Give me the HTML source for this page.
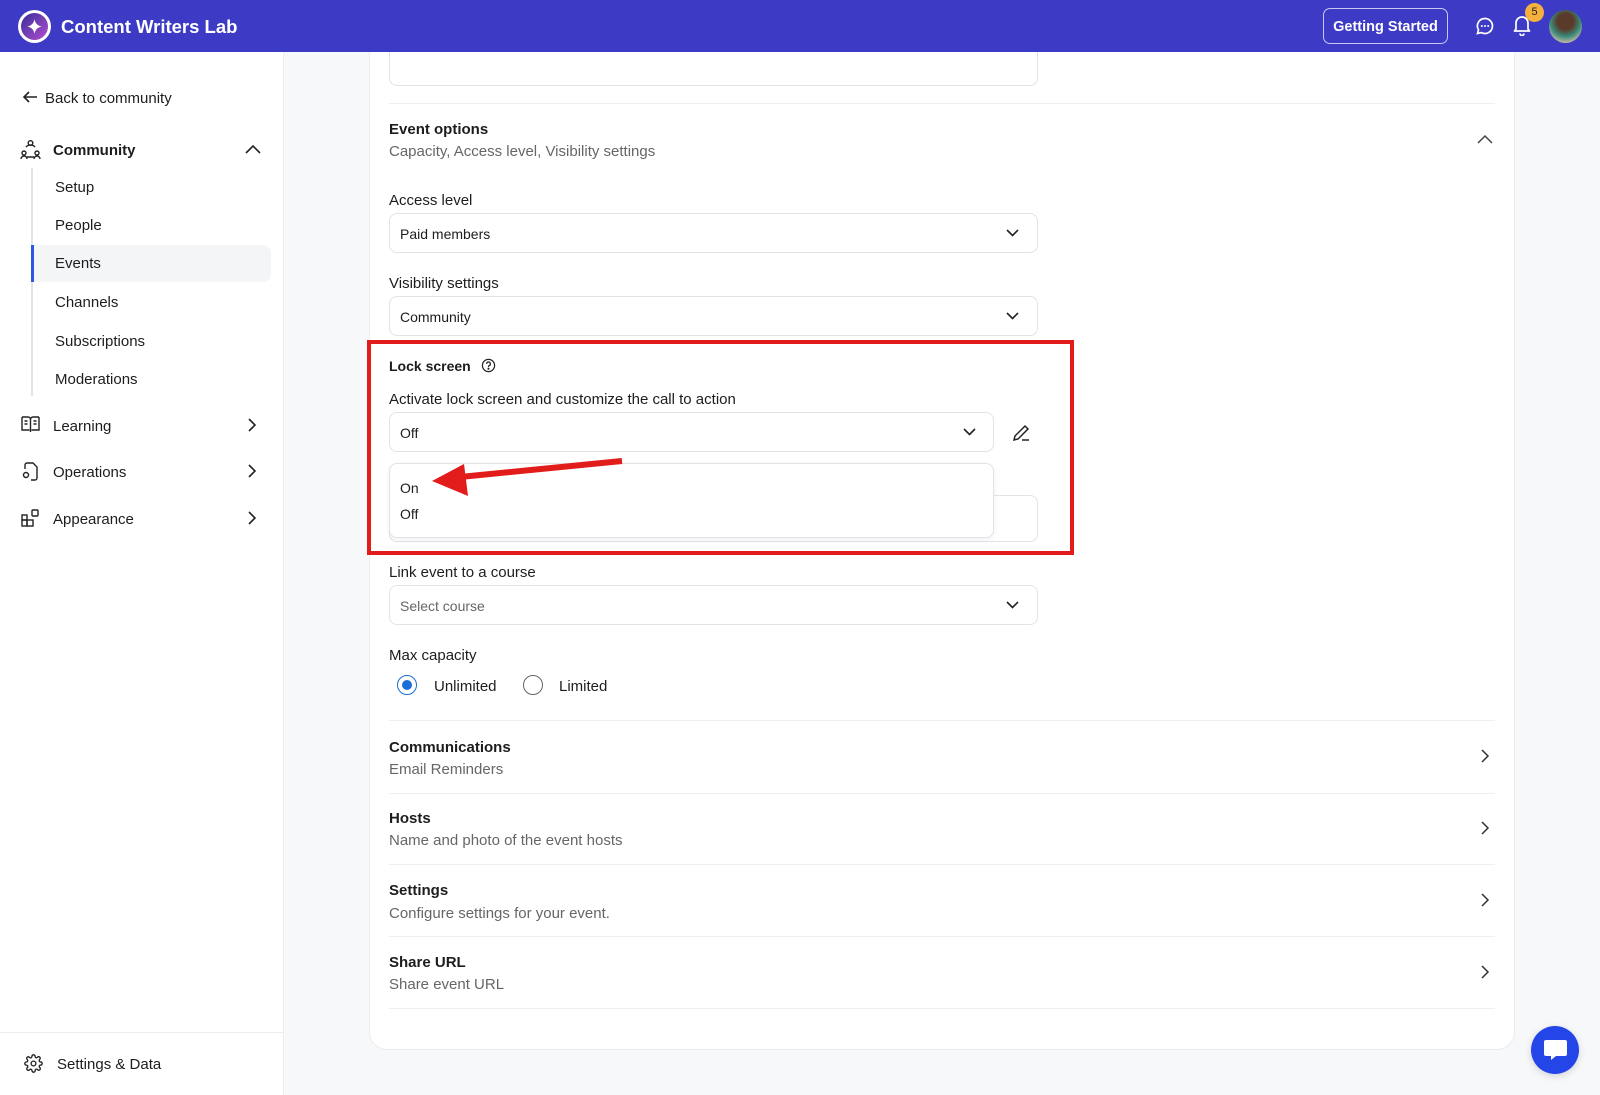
<!DOCTYPE html>
<html><head><meta charset="utf-8"><style>
*{margin:0;padding:0;box-sizing:border-box}
body{width:1600px;height:1095px;position:relative;overflow:hidden;background:#f7f8fa;font-family:"Liberation Sans",sans-serif;color:#1d1d1f;font-size:15px}
.a{position:absolute;line-height:20px;white-space:nowrap;margin-top:2px}
.hdr{position:absolute;left:0;top:0;width:1600px;height:52px;background:#3d3bc5;z-index:5}
.top{z-index:6}
.side{position:absolute;left:0;top:52px;width:284px;height:1043px;background:#fff;border-right:1px solid #ececf0}
.card{position:absolute;left:369px;top:30px;width:1146px;height:1020px;background:#fff;border:1px solid #ececf0;border-radius:18px}
.inp{position:absolute;border:1px solid #e2e3e8;border-radius:8px;background:#fff}
.div{position:absolute;left:389px;width:1106px;height:1px;background:#efeff2}
.b{font-weight:bold}
.g{color:#666}
.s{font-size:14px}
svg{position:absolute}
</style></head><body>
<div class="hdr"></div>
<div class="top" style="position:absolute;left:18px;top:10px;width:33px;height:33px;border-radius:50%;background:#fff"></div>
<div class="top" style="position:absolute;left:21px;top:13px;width:27px;height:27px;border-radius:50%;background:linear-gradient(135deg,#3a2d9a,#b14ed0)"></div>
<svg class="top" style="left:26px;top:18px" width="17" height="17" viewBox="0 0 16 16"><path d="M8 1 Q9 7 15 8 Q9 9 8 15 Q7 9 1 8 Q7 7 8 1Z" fill="#fff"/></svg>
<div class="a b top" style="left:61px;top:13px;font-size:18.5px;line-height:24px;color:#fff">Content Writers Lab</div>
<div class="top" style="position:absolute;left:1323px;top:8px;width:125px;height:36px;border:1px solid #c9c8f0;border-radius:7px;color:#fff;font-weight:bold;font-size:14.5px;text-align:center;line-height:36px">Getting Started</div>
<svg class="top" style="left:1475px;top:16px" width="20" height="20" viewBox="0 0 20 20"><path d="M10 2.5a7.5 7.5 0 1 1-3.6 14.1L2.5 17.5l1-3.6A7.5 7.5 0 0 1 10 2.5z" fill="none" stroke="#fff" stroke-width="1.7"/><circle cx="6.8" cy="10" r="1" fill="#fff"/><circle cx="10" cy="10" r="1" fill="#fff"/><circle cx="13.2" cy="10" r="1" fill="#fff"/></svg>
<svg class="top" style="left:1512px;top:14px" width="20" height="22" viewBox="0 0 20 22"><path d="M4 15V9a6 6 0 0 1 12 0v6l1.5 2h-15z M8 19.5a2 2 0 0 0 4 0" fill="none" stroke="#fff" stroke-width="1.7" stroke-linejoin="round"/></svg>
<div class="top" style="position:absolute;left:1525px;top:3px;width:19px;height:19px;border-radius:50%;background:#f5b13d;color:#222;font-size:11px;text-align:center;line-height:19px">5</div>
<div class="top" style="position:absolute;left:1549px;top:10px;width:33px;height:33px;border-radius:50%;background:radial-gradient(circle at 50% 35%,#5a3a2a 0 30%,#3a8a78 55%,#c9b9a8 80%)"></div>

<div class="side"></div>
<svg style="left:22px;top:89px" width="16" height="16" viewBox="0 0 16 16"><path d="M15 8H2M7 3L2 8l5 5" fill="none" stroke="#222" stroke-width="1.6"/></svg>
<div class="a" style="left:45px;top:87px">Back to community</div>
<svg style="left:20px;top:139px" width="21" height="21" viewBox="0 0 21 21" fill="none" stroke="#222" stroke-width="1.4"><circle cx="10.5" cy="4" r="2.3"/><circle cx="4" cy="14" r="2"/><circle cx="17" cy="14" r="2"/><path d="M1 20a3 3 0 0 1 6 0M14 20a3 3 0 0 1 6 0M6 8a6 6 0 0 1 9 0M7 18h7"/></svg>
<div class="a b" style="left:53px;top:139px">Community</div>
<svg style="left:245px;top:144px" width="16" height="10" viewBox="0 0 16 10"><path d="M1 9l7-7 7 7" fill="none" stroke="#222" stroke-width="1.6"/></svg>
<div style="position:absolute;left:31px;top:168px;width:2px;height:228px;background:#e3e3e8"></div>
<div style="position:absolute;left:31px;top:245px;width:240px;height:37px;background:#f4f5f7;border-radius:0 8px 8px 0"></div>
<div style="position:absolute;left:31px;top:245px;width:3px;height:37px;background:#2f55e4"></div>
<div class="a" style="left:55px;top:176px">Setup</div>
<div class="a" style="left:55px;top:214px">People</div>
<div class="a" style="left:55px;top:252px">Events</div>
<div class="a" style="left:55px;top:291px">Channels</div>
<div class="a" style="left:55px;top:330px">Subscriptions</div>
<div class="a" style="left:55px;top:368px">Moderations</div>
<svg style="left:21px;top:416px" width="19" height="17" viewBox="0 0 19 17" fill="none" stroke="#222" stroke-width="1.4"><path d="M1 1h6a2.5 2.5 0 0 1 2.5 2.5V16M18 1h-6a2.5 2.5 0 0 0-2.5 2.5M1 1v13h7.5M18 1v13h-7.5M3.5 5h3M3.5 8h3M12.5 5h3M12.5 8h3"/></svg>
<div class="a" style="left:53px;top:415px">Learning</div>
<svg style="left:21px;top:462px" width="18" height="19" viewBox="0 0 18 19" fill="none" stroke="#222" stroke-width="1.4"><path d="M4 7V3a2 2 0 0 1 2-2h6l4 4v11a2 2 0 0 1-2 2H10"/><circle cx="5" cy="13" r="2.5"/></svg>
<div class="a" style="left:53px;top:461px">Operations</div>
<svg style="left:21px;top:509px" width="18" height="18" viewBox="0 0 18 18" fill="none" stroke="#222" stroke-width="1.4"><rect x="1" y="6" width="5" height="5"/><rect x="1" y="11" width="5" height="6"/><rect x="6" y="11" width="6" height="6"/><rect x="11" y="1" width="6" height="6" rx="1"/></svg>
<div class="a" style="left:53px;top:508px">Appearance</div>
<svg style="left:248px;top:418px" width="9" height="14" viewBox="0 0 9 14"><path d="M1 1l6 6-6 6" fill="none" stroke="#222" stroke-width="1.6"/></svg>
<svg style="left:248px;top:464px" width="9" height="14" viewBox="0 0 9 14"><path d="M1 1l6 6-6 6" fill="none" stroke="#222" stroke-width="1.6"/></svg>
<svg style="left:248px;top:511px" width="9" height="14" viewBox="0 0 9 14"><path d="M1 1l6 6-6 6" fill="none" stroke="#222" stroke-width="1.6"/></svg>
<div style="position:absolute;left:0;top:1032px;width:284px;height:1px;background:#ececf0"></div>
<svg style="left:24px;top:1054px" width="19" height="19" viewBox="0 0 24 24" fill="none" stroke="#222" stroke-width="1.7"><circle cx="12" cy="12" r="3"/><path d="M19.4 15a1.7 1.7 0 0 0 .3 1.8l.1.1a2 2 0 1 1-2.8 2.8l-.1-.1a1.7 1.7 0 0 0-1.8-.3 1.7 1.7 0 0 0-1 1.5V21a2 2 0 1 1-4 0v-.1a1.7 1.7 0 0 0-1.1-1.5 1.7 1.7 0 0 0-1.8.3l-.1.1a2 2 0 1 1-2.8-2.8l.1-.1a1.7 1.7 0 0 0 .3-1.8 1.7 1.7 0 0 0-1.5-1H3a2 2 0 1 1 0-4h.1a1.7 1.7 0 0 0 1.5-1.1 1.7 1.7 0 0 0-.3-1.8l-.1-.1a2 2 0 1 1 2.8-2.8l.1.1a1.7 1.7 0 0 0 1.8.3H9a1.7 1.7 0 0 0 1-1.5V3a2 2 0 1 1 4 0v.1a1.7 1.7 0 0 0 1 1.5 1.7 1.7 0 0 0 1.8-.3l.1-.1a2 2 0 1 1 2.8 2.8l-.1.1a1.7 1.7 0 0 0-.3 1.8V9a1.7 1.7 0 0 0 1.5 1H21a2 2 0 1 1 0 4h-.1a1.7 1.7 0 0 0-1.5 1z"/></svg>
<div class="a" style="left:57px;top:1053px">Settings &amp; Data</div>

<div class="card"></div>
<div class="inp" style="left:389px;top:20px;width:649px;height:66px"></div>
<div class="div" style="top:103px"></div>
<div class="a b" style="left:389px;top:118px">Event options</div>
<div class="a g" style="left:389px;top:140px">Capacity, Access level, Visibility settings</div>
<svg style="left:1477px;top:134px" width="16" height="10" viewBox="0 0 16 10"><path d="M1 9l7-7 7 7" fill="none" stroke="#444" stroke-width="1.5"/></svg>

<div class="a" style="left:389px;top:189px">Access level</div>
<div class="inp" style="left:389px;top:213px;width:649px;height:40px"></div>
<div class="a s" style="left:400px;top:222px">Paid members</div>
<svg style="left:1006px;top:229px" width="13" height="8" viewBox="0 0 13 8"><path d="M1 1l5.5 5.5L12 1" fill="none" stroke="#222" stroke-width="1.6"/></svg>
<div class="a" style="left:389px;top:272px">Visibility settings</div>
<div class="inp" style="left:389px;top:296px;width:649px;height:40px"></div>
<div class="a s" style="left:400px;top:305px">Community</div>
<svg style="left:1006px;top:312px" width="13" height="8" viewBox="0 0 13 8"><path d="M1 1l5.5 5.5L12 1" fill="none" stroke="#222" stroke-width="1.6"/></svg>

<div class="a b s" style="left:389px;top:354px">Lock screen</div>
<svg style="left:481px;top:358px" width="15" height="15" viewBox="0 0 16 16" fill="none" stroke="#222" stroke-width="1.3"><circle cx="8" cy="8" r="6.5"/><path d="M6 6.3a2 2 0 1 1 2.6 1.9c-.4.2-.6.5-.6.9v.6"/><circle cx="8" cy="11.5" r=".5" fill="#222"/></svg>
<div class="a" style="left:389px;top:388px">Activate lock screen and customize the call to action</div>
<div class="inp" style="left:389px;top:412px;width:605px;height:40px"></div>
<div class="a s" style="left:400px;top:421px">Off</div>
<svg style="left:963px;top:428px" width="13" height="8" viewBox="0 0 13 8"><path d="M1 1l5.5 5.5L12 1" fill="none" stroke="#222" stroke-width="1.6"/></svg>
<svg style="left:1011px;top:423px" width="20" height="20" viewBox="0 0 20 20" fill="none" stroke="#222" stroke-width="1.5"><path d="M3 17l1-4L14 3l3 3-10 10z M11 17h7"/></svg>
<div class="inp" style="left:389px;top:495px;width:649px;height:47px"></div>
<div class="inp" style="left:389px;top:463px;width:605px;height:75px;box-shadow:0 2px 6px rgba(0,0,0,.06)"></div>
<div class="a s" style="left:400px;top:476px">On</div>
<div class="a s" style="left:400px;top:502px">Off</div>
<svg style="left:420px;top:455px" width="210" height="45" viewBox="0 0 210 45"><path d="M202 6L40 22" stroke="#e21b1b" stroke-width="6"/><path d="M12 26L44 9 48 41z" fill="#e21b1b"/></svg>
<div style="position:absolute;left:367px;top:340px;width:707px;height:215px;border:4.5px solid #e21b1b"></div>

<div class="a" style="left:389px;top:561px">Link event to a course</div>
<div class="inp" style="left:389px;top:585px;width:649px;height:40px"></div>
<div class="a g s" style="left:400px;top:594px">Select course</div>
<svg style="left:1006px;top:601px" width="13" height="8" viewBox="0 0 13 8"><path d="M1 1l5.5 5.5L12 1" fill="none" stroke="#222" stroke-width="1.6"/></svg>
<div class="a" style="left:389px;top:644px">Max capacity</div>
<div style="position:absolute;left:397px;top:675px;width:20px;height:20px;border-radius:50%;border:1.5px solid #1a6fd6"></div>
<div style="position:absolute;left:402px;top:680px;width:10px;height:10px;border-radius:50%;background:#1a6fd6"></div>
<div class="a" style="left:434px;top:675px">Unlimited</div>
<div style="position:absolute;left:523px;top:675px;width:20px;height:20px;border-radius:50%;border:1.3px solid #666"></div>
<div class="a" style="left:559px;top:675px">Limited</div>

<div class="div" style="top:720px"></div>
<div class="a b" style="left:389px;top:736px">Communications</div>
<div class="a g" style="left:389px;top:758px">Email Reminders</div>
<div class="div" style="top:793px"></div>
<div class="a b" style="left:389px;top:807px">Hosts</div>
<div class="a g" style="left:389px;top:829px">Name and photo of the event hosts</div>
<div class="div" style="top:864px"></div>
<div class="a b" style="left:389px;top:879px">Settings</div>
<div class="a g" style="left:389px;top:902px">Configure settings for your event.</div>
<div class="div" style="top:936px"></div>
<div class="a b" style="left:389px;top:951px">Share URL</div>
<div class="a g" style="left:389px;top:973px">Share event URL</div>
<div class="div" style="top:1008px"></div>
<svg style="left:1481px;top:749px" width="9" height="14" viewBox="0 0 9 14"><path d="M1 1l6 6-6 6" fill="none" stroke="#333" stroke-width="1.5"/></svg>
<svg style="left:1481px;top:821px" width="9" height="14" viewBox="0 0 9 14"><path d="M1 1l6 6-6 6" fill="none" stroke="#333" stroke-width="1.5"/></svg>
<svg style="left:1481px;top:893px" width="9" height="14" viewBox="0 0 9 14"><path d="M1 1l6 6-6 6" fill="none" stroke="#333" stroke-width="1.5"/></svg>
<svg style="left:1481px;top:965px" width="9" height="14" viewBox="0 0 9 14"><path d="M1 1l6 6-6 6" fill="none" stroke="#333" stroke-width="1.5"/></svg>

<div style="position:absolute;left:1531px;top:1026px;width:48px;height:48px;border-radius:50%;background:#2445e8;box-shadow:0 2px 8px rgba(0,0,0,.15)"></div>
<svg style="left:1543px;top:1039px" width="25" height="24" viewBox="0 0 25 24"><path d="M3 1h19a2 2 0 0 1 2 2v12a2 2 0 0 1-2 2H13l-5 4v-4H3a2 2 0 0 1-2-2V3a2 2 0 0 1 2-2z" fill="#fff"/></svg>
</body></html>
